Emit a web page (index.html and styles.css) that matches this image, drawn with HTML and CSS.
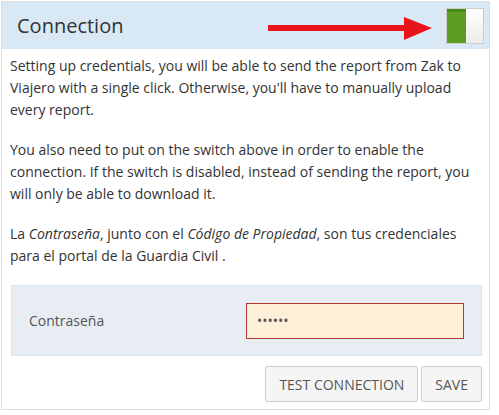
FILE: index.html
```html
<!DOCTYPE html>
<html lang="en">
<head>
  <meta charset="UTF-8" />
  <meta name="viewport" content="width=device-width, initial-scale=1.0" />
  <title>Connection</title>
  <link rel="stylesheet" href="styles.css">
</head>
<body>
  <div class="panel">
    <div class="panel-heading">
      <h3>Connection</h3>
      <div class="heading-right">
        <svg class="arrow" width="164" height="24" viewBox="0 0 164 24">
          <rect x="0" y="8" width="140" height="6" fill="#e8141b" />
          <polygon points="136,0 164,11 136,23" fill="#e8141b" />
        </svg>
        <span class="switch"><span class="switch-on"></span><span class="switch-off"></span></span>
      </div>
    </div>

    <div class="panel-body">
      <p>Setting up credentials, you will be able to send the report from Zak to Viajero with a single click. Otherwise, you'll have to manually upload every report.</p>
      <p>You also need to put on the switch above in order to enable the connection. If the switch is disabled, instead of sending the report, you will only be able to download it.</p>
      <p>La <em>Contraseña</em>, junto con el <em>Código de Propiedad</em>, son tus credenciales para el portal de la Guardia Civil .</p>

      <div class="form-box">
        <label for="pwd">Contraseña</label>
        <input id="pwd" type="password" value="123456" />
      </div>

      <div class="actions">
        <button>Test connection</button>
        <button>Save</button>
      </div>
    </div>
  </div>
</body>
</html>
```

FILE: styles.css
```css
body {
  margin: 0;
  padding: 1px;
  font-family: "Open Sans", Arial, sans-serif;
  font-size: 14px;
  color: #333;
  background: #fff;
}

.panel {
  width: 487px;
  border: 1px solid #ddd;
  background: #fff;
}

.panel-heading {
  height: 47px;
  background: #d9e8f5;
  display: flex;
  align-items: center;
  justify-content: space-between;
  padding: 0 5px 0 15px;
}

.panel-heading h3 {
  margin: 0;
  font-size: 20px;
  font-weight: normal;
  color: #333;
}

.heading-right {
  display: flex;
  align-items: center;
}

.arrow {
  display: block;
  margin: 6px 14px 0 0;
}

.switch {
  display: flex;
  width: 36px;
  height: 34px;
  border: 1px solid #ccc;
}

.switch-on {
  width: 19px;
  background: #5d9e22;
  border-top: 3px solid #4a8a16;
}

.switch-off {
  flex: 1;
  background: linear-gradient(#fff, #ececec);
}

.panel-body {
  padding: 6px 7px 7px 8px;
}

.panel-body p {
  margin: 0 0 18px;
  line-height: 22px;
}

.form-box {
  display: flex;
  align-items: center;
  justify-content: space-between;
  height: 69px;
  padding: 0 17px 0 17px;
  margin-left: 1px;
  background: #e8edf4;
  border: 1px solid #dde3ea;
}

.form-box label {
  color: #555;
}

.form-box input {
  width: 196px;
  height: 34px;
  box-sizing: content-box;
  padding: 0 10px;
  border: 1px solid #b03a32;
  background: #fdefd8;
  font-family: inherit;
  font-size: 14px;
  color: #555;
  outline: none;
}

.actions {
  display: flex;
  justify-content: flex-end;
  gap: 3px;
  margin-top: 10px;
}

.actions button {
  height: 36px;
  padding: 0 13px;
  background: #f5f5f5;
  border: 1px solid #ccc;
  border-radius: 2px;
  font-family: inherit;
  font-size: 14px;
  text-transform: uppercase;
  color: #555;
  cursor: pointer;
}
```
